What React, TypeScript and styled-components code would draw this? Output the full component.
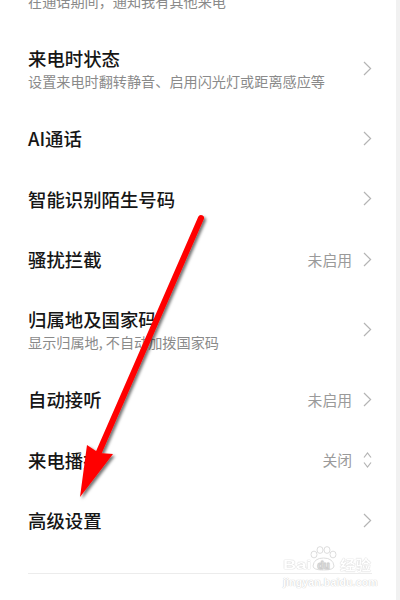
import React from 'react';
import styled, { createGlobalStyle } from 'styled-components';

const GlobalStyle = createGlobalStyle`
  html, body {
    margin: 0;
    padding: 0;
    background: #ffffff;
  }
  body {
    font-family: "Noto Sans CJK SC", "Noto Sans", sans-serif;
  }
`;

type Item = {
  title: string;
  sub?: string;
  value?: string;
  picker?: boolean;
};

const items: Item[] = [
  { title: '来电等待', sub: '在通话期间，通知我有其他来电' },
  { title: '来电时状态', sub: '设置来电时翻转静音、启用闪光灯或距离感应等' },
  { title: 'AI通话' },
  { title: '智能识别陌生号码' },
  { title: '骚扰拦截', value: '未启用' },
  { title: '归属地及国家码', sub: '显示归属地, 不自动加拨国家码' },
  { title: '自动接听', value: '未启用' },
  { title: '来电播报', value: '关闭', picker: true },
  { title: '高级设置' },
];

const Screen = styled.div`
  position: relative;
  width: 400px;
  height: 600px;
  display: flex;
  overflow: hidden;
  background: #ffffff;
`;

const Panel = styled.div`
  width: 396px;
  background: #ffffff;
`;

const EdgeStrip = styled.div`
  flex: 1;
  background: #f1f1f1;
`;

const List = styled.div`
  margin-top: -51px;
  padding: 0 24px 0 28px;
  display: flex;
  flex-direction: column;
`;

const Row = styled.div<{ $tall: boolean }>`
  height: ${(p) => (p.$tall ? '79.5px' : '60.5px')};
  display: flex;
  align-items: center;
`;

const TextBlock = styled.div`
  flex: 1;
  display: flex;
  flex-direction: column;
  gap: 1px;
`;

const Title = styled.div`
  font-size: 18.4px;
  line-height: 24px;
  font-weight: 500;
  color: #161616;
`;

const Sub = styled.div`
  font-size: 14.15px;
  line-height: 20px;
  color: #8a8a8a;
`;

const Value = styled.div`
  font-size: 14.8px;
  color: #9a9a9a;
  margin-right: 11px;
`;

const Divider = styled.div`
  margin-top: 22px;
  height: 1px;
  background: #ececec;
`;

const Chevron = () => (
  <svg width="9" height="15" viewBox="0 0 9 15">
    <path d="M1 1 L7.6 7.5 L1 14" fill="none" stroke="#b4b4b4" strokeWidth="1.2" />
  </svg>
);

const UpDown = () => (
  <svg width="9" height="18" viewBox="0 0 9 18">
    <path d="M1 6.5 L4.5 2 L8 6.5" fill="none" stroke="#b4b4b4" strokeWidth="1.2" />
    <path d="M1 11.5 L4.5 16 L8 11.5" fill="none" stroke="#b4b4b4" strokeWidth="1.2" />
  </svg>
);

const ArrowLayer = styled.svg`
  position: absolute;
  left: 0;
  top: 0;
  pointer-events: none;
`;

const Watermark = styled.div`
  position: absolute;
  left: 283px;
  top: 546px;
  width: 90px;
  display: flex;
  flex-direction: column;
  color: #ffffff;
  text-shadow: 0 0 1px #cfcfcf, 0 0 1px #cfcfcf;
  pointer-events: none;
`;

const MarkTop = styled.div`
  display: flex;
  align-items: flex-end;
  height: 25px;
`;

const MarkBai = styled.span`
  display: inline-block;
  width: 26px;
  font-family: "Liberation Sans", Arial, sans-serif;
  font-weight: 700;
  font-size: 13.5px;
  line-height: 13px;
  transform: scaleX(1.35);
  transform-origin: left bottom;
`;

const MarkCn = styled.span`
  font-family: "Noto Sans CJK SC", sans-serif;
  font-size: 14px;
  font-weight: 700;
  line-height: 14px;
  margin-left: 2px;
  transform: scaleX(1.1);
  transform-origin: left bottom;
`;

const MarkSite = styled.div`
  font-family: "Liberation Sans", Arial, sans-serif;
  font-size: 10.5px;
  font-weight: 700;
  margin-top: 6px;
  line-height: 10px;
  letter-spacing: 0.15px;
`;

const Paw = () => (
  <svg width="29" height="25" viewBox="0 0 29 25">
    <g fill="#ffffff" stroke="#d4d4d4" strokeWidth="0.8">
      <ellipse cx="5" cy="8.5" rx="3" ry="3.4" />
      <ellipse cx="11" cy="4" rx="3" ry="3.4" />
      <ellipse cx="18" cy="4" rx="3" ry="3.4" />
      <ellipse cx="24" cy="8.5" rx="3" ry="3.4" />
      <path d="M4 20 Q5 12 14.5 12 Q24 12 25 20 Q25 24 14.5 24 Q4 24 4 20 Z" />
    </g>
    <text
      x="14.5"
      y="22.5"
      textAnchor="middle"
      fontFamily="Liberation Sans, Arial, sans-serif"
      fontWeight="700"
      fontSize="10"
      fill="#ffffff"
      stroke="#cccccc"
      strokeWidth="0.5"
    >
      du
    </text>
  </svg>
);

export default function App() {
  return (
    <>
      <GlobalStyle />
      <Screen>
        <Panel>
          <List>
            {items.map((it) => (
              <Row key={it.title} $tall={!!it.sub}>
                <TextBlock>
                  <Title>{it.title}</Title>
                  {it.sub && <Sub>{it.sub}</Sub>}
                </TextBlock>
                {it.value && <Value>{it.value}</Value>}
                {it.picker ? <UpDown /> : <Chevron />}
              </Row>
            ))}
            <Divider />
          </List>
        </Panel>
        <EdgeStrip />
        <Watermark>
          <MarkTop>
            <MarkBai>Bai</MarkBai>
            <Paw />
            <MarkCn>经验</MarkCn>
          </MarkTop>
          <MarkSite>jingyan.baidu.com</MarkSite>
        </Watermark>
        <ArrowLayer width="400" height="600" viewBox="0 0 400 600">
          <defs>
            <filter id="shade" x="-20%" y="-20%" width="140%" height="140%">
              <feDropShadow dx="2" dy="2" stdDeviation="1.6" floodColor="#000" floodOpacity="0.55" />
            </filter>
          </defs>
          <g filter="url(#shade)">
            <line x1="201" y1="218" x2="99" y2="452" stroke="#ff0000" strokeWidth="6" strokeLinecap="round" />
            <polygon points="80,497 87,445 99,453 113,454" fill="#ff0000" />
          </g>
        </ArrowLayer>
      </Screen>
    </>
  );
}
